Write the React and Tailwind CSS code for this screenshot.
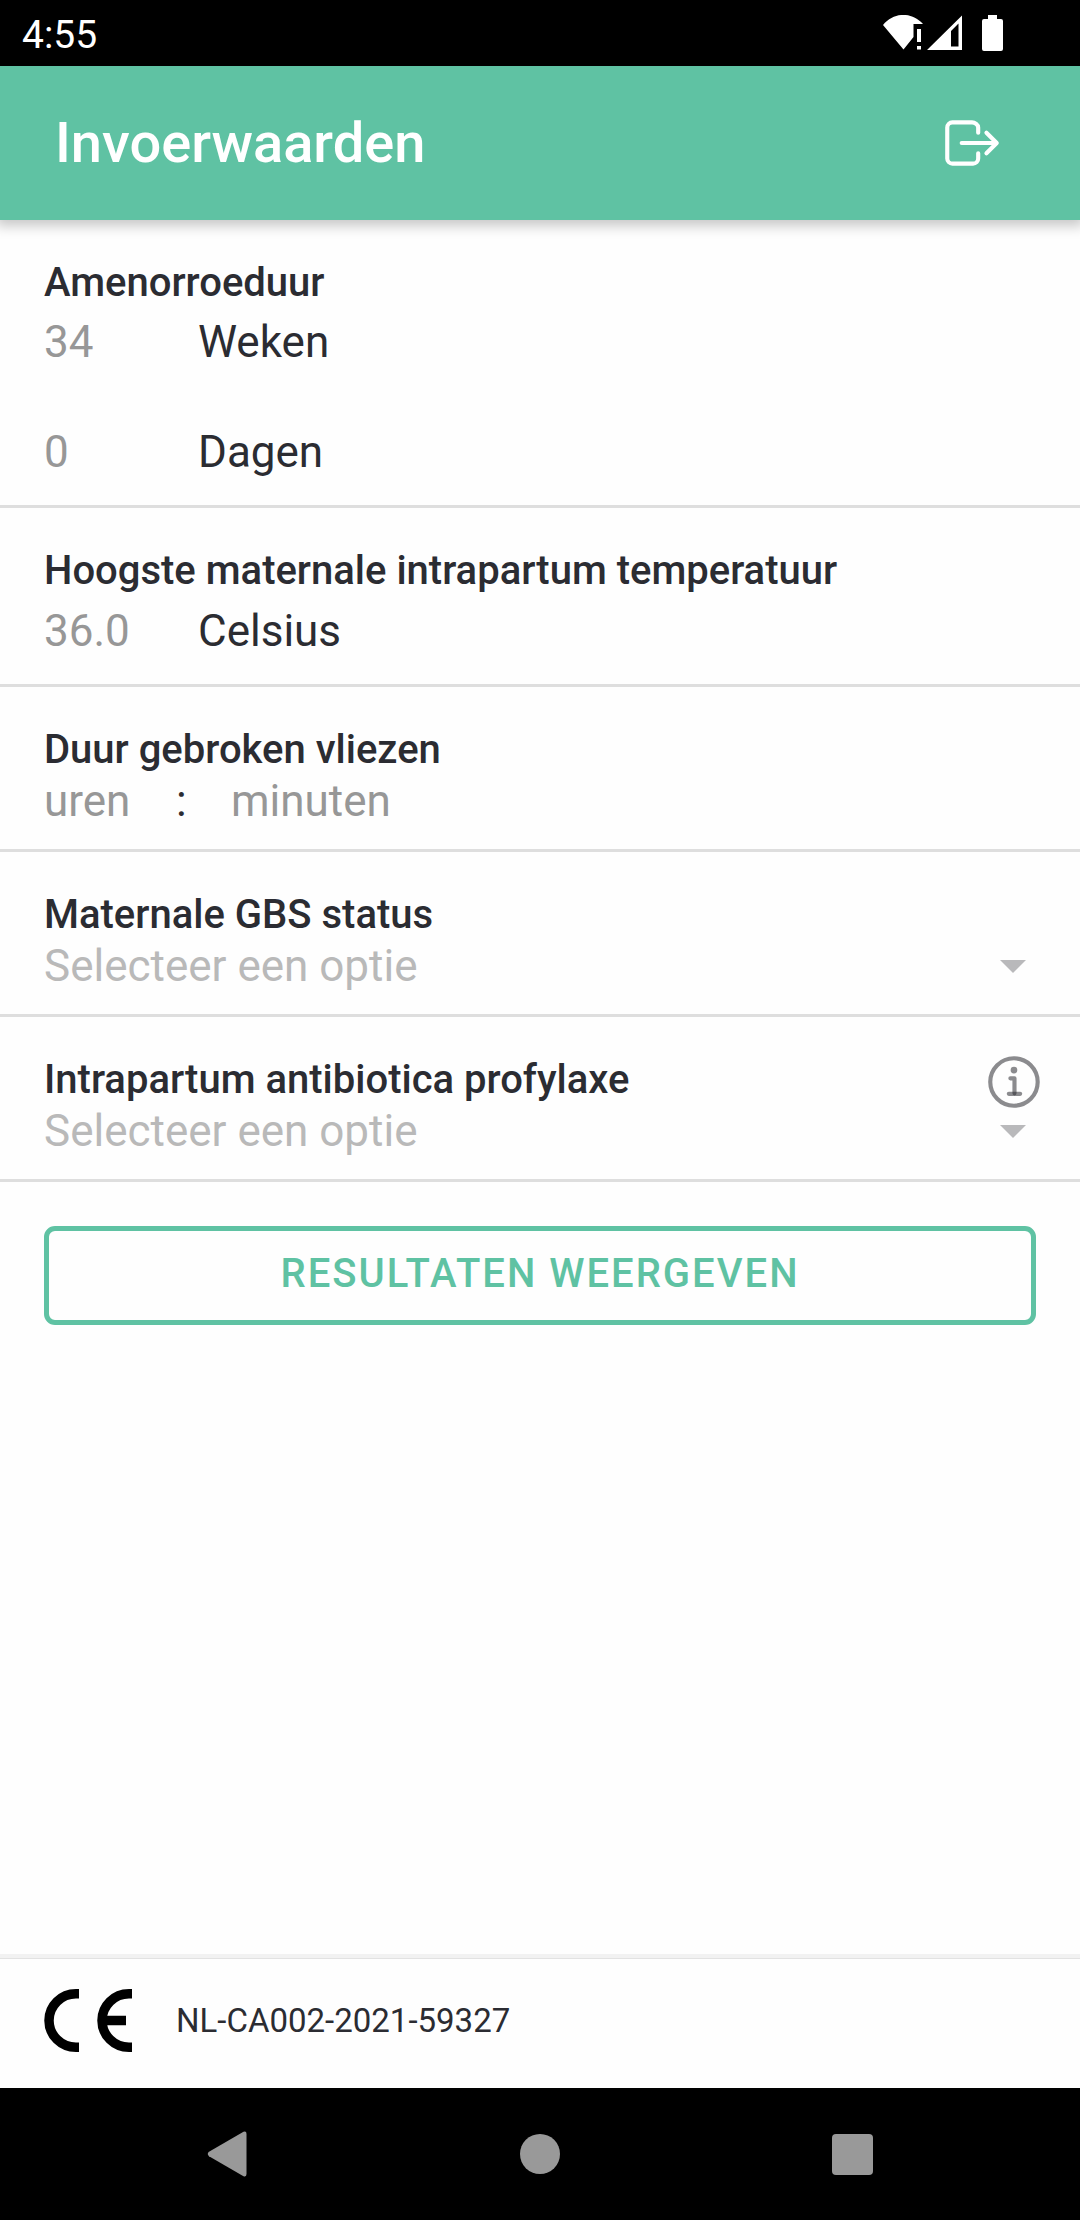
import React from 'react'
import { IoLogOutOutline, IoInformationCircleOutline } from 'react-icons/io5'

function StatusBar() {
  return (
    <div className="flex h-[66px] items-center justify-between bg-black pl-[22px] pr-[77px] text-white">
      <span className="pt-[3px] text-[39px] leading-[46px]">4:55</span>
      <div className="flex items-center">
        <svg className="mr-1 h-9 w-10" viewBox="0 0 40 36" fill="currentColor">
          <path d="M0 10C11-3.300 29-3.300 40 9H30.500V22L20.500 34.500Z" />
          <path d="M34 14h4v13h-4zM34 31h4v3.500h-4z" />
        </svg>
        <svg className="mr-5 h-9 w-[35px]" viewBox="0 0 35 36" fill="currentColor" fillRule="evenodd">
          <path d="M0 35L35 0.500V35ZM24 16V31.500H31.500V8.500Z" />
        </svg>
        <svg className="h-9 w-[21px]" viewBox="0 0 21 36" fill="currentColor">
          <path d="M6 0h9v4h4a2 2 0 0 1 2 2v28a2 2 0 0 1-2 2H2a2 2 0 0 1-2-2V6a2 2 0 0 1 2-2h4z" />
        </svg>
      </div>
    </div>
  )
}

function Section({ children }) {
  return <div className="border-b-3 border-[#dedede] pl-11 pt-10">{children}</div>
}

function SectionTitle({ as: Tag = 'h2', children, ...rest }) {
  return (
    <Tag className="block text-[40px] font-medium leading-[46px]" {...rest}>
      {children}
    </Tag>
  )
}

function UnitField({ id, placeholder, unit }) {
  return (
    <div className="flex items-center text-[44px] leading-[52px]">
      <input
        id={id}
        inputMode="decimal"
        placeholder={placeholder}
        className="h-[52px] w-[154px] outline-none placeholder:text-[#979797]"
      />
      <label htmlFor={id}>{unit}</label>
    </div>
  )
}

function OptionSelect({ id, options }) {
  return (
    <div className="relative mt-[2px] mb-[22px] flex items-center">
      <select
        id={id}
        defaultValue=""
        className="h-[52px] w-full appearance-none bg-transparent text-[44px] leading-[52px] text-[#b9b9b9] outline-none"
      >
        <option value="" disabled>Selecteer een optie</option>
        {options.map((o) => (
          <option key={o}>{o}</option>
        ))}
      </select>
      <svg className="pointer-events-none absolute right-[54px] h-[13px] w-[26px]" viewBox="0 0 26 13" fill="#b9b9bb">
        <path d="M0 0h26L13 13z" />
      </svg>
    </div>
  )
}

function CeMark() {
  return (
    <svg className="h-[63px] w-[88px]" viewBox="0 0 88 63" fill="none" stroke="#000" strokeWidth="9.500" role="img" aria-label="CE">
      <path d="M35 4.750H32A27 26.750 0 0 0 32 58.250H35" />
      <path d="M88 4.750H85A27 26.750 0 0 0 85 58.250H88M58 31.500H82" />
    </svg>
  )
}

function NavBar() {
  return (
    <nav className="flex h-[132px] items-center justify-between bg-black px-[19.2%] text-[#999999]">
      <button aria-label="Terug">
        <svg className="h-[46px] w-10" viewBox="0 0 40 46" fill="currentColor">
          <path d="M2 20.800L36.500.8Q39.500-.3 39.500 3V43Q39.500 46.300 36.500 45.200L2 25.200Q-.5 23 2 20.800Z" />
        </svg>
      </button>
      <button aria-label="Start" className="h-10 w-10 rounded-full bg-current" />
      <button aria-label="Overzicht" className="h-[41px] w-[41px] rounded bg-current" />
    </nav>
  )
}

export default function App() {
  return (
    <div className="flex min-h-screen flex-col overflow-x-hidden bg-[#fefefe] font-[Roboto,sans-serif] text-[#2b2c32]">
      <StatusBar />

      <header className="flex h-[154px] items-center justify-between bg-[#5fc2a3] pl-[55px] pr-[75px] text-white shadow-[0_2px_12px_4px_rgba(0,0,0,0.22)]">
        <h1 className="text-[56px] font-medium leading-[64px]">Invoerwaarden</h1>
        <button aria-label="Uitloggen">
          <IoLogOutOutline size={66} />
        </button>
      </header>

      <main className="flex-1">
        <Section>
          <SectionTitle>Amenorroeduur</SectionTitle>
          <div className="mt-[10px] mb-[27px] flex flex-col gap-[58px]">
            <UnitField id="weken" placeholder="34" unit="Weken" />
            <UnitField id="dagen" placeholder="0" unit="Dagen" />
          </div>
        </Section>

        <Section>
          <SectionTitle>Hoogste maternale intrapartum temperatuur</SectionTitle>
          <div className="mt-[11px] mb-[27px]">
            <UnitField id="temperatuur" placeholder="36.0" unit="Celsius" />
          </div>
        </Section>

        <Section>
          <SectionTitle>Duur gebroken vliezen</SectionTitle>
          <div className="mt-[2px] mb-[22px] flex items-center text-[44px] leading-[52px]">
            <input aria-label="uren" placeholder="uren" className="h-[52px] w-[132px] outline-none placeholder:text-[#979797]" />
            <span className="w-[55px]">:</span>
            <input aria-label="minuten" placeholder="minuten" className="h-[52px] w-[220px] outline-none placeholder:text-[#979797]" />
          </div>
        </Section>

        <Section>
          <SectionTitle as="label" htmlFor="gbs">Maternale GBS status</SectionTitle>
          <OptionSelect id="gbs" options={['Negatief', 'Positief', 'Onbekend']} />
        </Section>

        <Section>
          <div className="flex items-start justify-between pr-8">
            <SectionTitle as="label" htmlFor="profylaxe">Intrapartum antibiotica profylaxe</SectionTitle>
            <button aria-label="Informatie" className="-mt-[7px] -mb-[13px] text-[#2b2c32]/55">
              <IoInformationCircleOutline size={66} />
            </button>
          </div>
          <OptionSelect id="profylaxe" options={['Ja', 'Nee']} />
        </Section>

        <div className="px-11 pt-11">
          <button className="h-[99px] w-full rounded-[11px] border-5 border-[#5fc2a3] pb-1 text-[40px] font-medium uppercase leading-[46px] tracking-wider text-[#5fc2a3]">
            Resultaten weergeven
          </button>
        </div>
      </main>

      <footer className="flex items-center gap-11 border-t border-[#e2e2e2] px-11 pt-[30px] pb-9 shadow-[0_-4px_0_#f2f2f2]">
        <CeMark />
        <span className="text-[33px]">NL-CA002-2021-59327</span>
      </footer>

      <NavBar />
    </div>
  )
}
